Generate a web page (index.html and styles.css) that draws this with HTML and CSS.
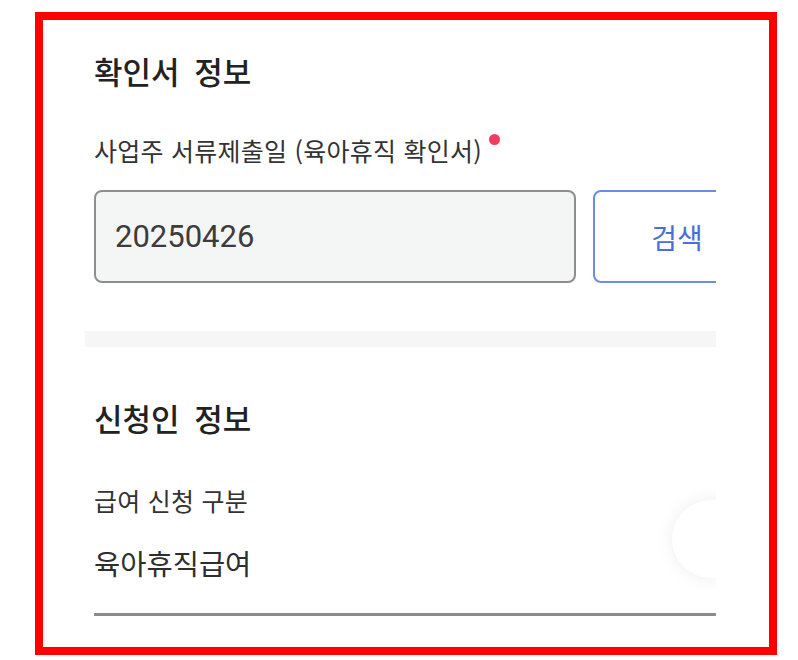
FILE: index.html
```html
<!DOCTYPE html>
<html lang="ko">
<head>
<meta charset="utf-8">
<title>확인서 정보</title>
<link rel="stylesheet" href="styles.css">
</head>
<body>
<div class="frame">
  <div class="screen">
    <section class="section">
      <h2 class="heading">확인서 정보</h2>
      <div class="label">사업주 서류제출일 (육아휴직 확인서)<span class="req"></span></div>
      <div class="input-row">
        <div class="input">20250426</div>
        <button class="btn">검색</button>
      </div>
    </section>
    <div class="divider"></div>
    <section class="section">
      <h2 class="heading heading-2">신청인 정보</h2>
      <div class="label label-2">급여 신청 구분</div>
      <div class="value">육아휴직급여</div>
    </section>
    <div class="fab"></div>
  </div>
</div>
</body>
</html>
```

FILE: styles.css
```css
* { box-sizing: border-box; }
html, body { margin: 0; padding: 0; background: #ffffff; }
body { font-family: Roboto, "Noto Sans CJK KR", sans-serif; }

.frame {
  margin: 12px 0 0 35px;
  width: 742px;
  height: 643px;
  border: 8px solid #ff0000;
  background: #ffffff;
  overflow: hidden;
}

.screen {
  position: relative;
  margin-left: 42px;
  width: 631px;
  height: 100%;
  overflow: hidden;
}

.section {
  padding: 31px 0 0 9px;
}

.heading {
  margin: 0;
  font-family: "Noto Sans CJK KR", sans-serif;
  font-size: 31px;
  line-height: 40px;
  font-weight: 500;
  color: #222222;
  word-spacing: 6px;
}

.label {
  margin-top: 43px;
  font-family: "Noto Sans CJK KR", sans-serif;
  font-size: 25px;
  letter-spacing: 0.25px;
  line-height: 32px;
  color: #333333;
  display: flex;
  align-items: flex-start;
  white-space: pre;
}

.req {
  width: 11px;
  height: 11px;
  border-radius: 50%;
  background: #f23d5c;
  margin: 0 0 0 7px;
}

.input-row {
  display: flex;
  gap: 17px;
  margin-top: 24px;
}

.input {
  flex: 0 0 482px;
  height: 93px;
  border: 2px solid #8e8e8e;
  border-radius: 8px;
  background: #f4f5f5;
  padding-left: 19px;
  display: flex;
  align-items: center;
  font-family: Roboto, sans-serif;
  font-size: 31px;
  color: #3c3c3c;
}

.btn {
  flex: 0 0 168px;
  height: 93px;
  border: 2px solid #6b8de3;
  border-radius: 8px;
  background: #ffffff;
  font-family: "Noto Sans CJK KR", sans-serif;
  font-size: 28px;
  color: #4a6fd6;
  padding: 0;
}

.divider {
  margin-top: 48px;
  height: 16px;
  background: #f6f6f6;
}

.heading-2 { margin-top: 20px; }

.label-2 { margin-top: 46px; }

.value {
  margin-top: 29px;
  font-family: "Noto Sans CJK KR", sans-serif;
  font-size: 28.5px;
  line-height: 36px;
  color: #2e2e2e;
  padding-bottom: 32px;
  border-bottom: 3px solid #8c8c8c;
}

.fab {
  position: absolute;
  left: 587px;
  top: 480px;
  width: 78px;
  height: 78px;
  border-radius: 50%;
  background: #ffffff;
  box-shadow: 0 0 18px rgba(0, 0, 0, 0.07);
}
```
